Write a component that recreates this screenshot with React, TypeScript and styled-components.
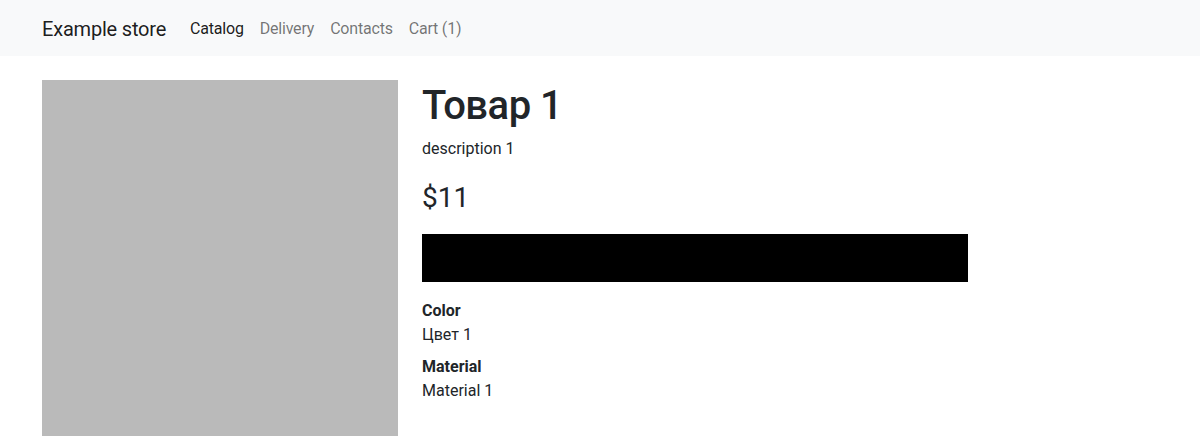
import React from "react";
import styled, { createGlobalStyle } from "styled-components";

const Global = createGlobalStyle`
  *, *::before, *::after { box-sizing: border-box; }
  body {
    margin: 0;
    font-family: "Segoe UI", Roboto, "Open Sans", sans-serif;
    font-size: 16px;
    line-height: 1.5;
    color: #212529;
    background: #fff;
  }
`;

const Navbar = styled.nav`
  background: #f8f9fa;
  height: 56px;
  display: flex;
  align-items: center;
`;

const Container = styled.div`
  width: 1140px;
  margin: 0 auto;
  padding: 2px 12px 0;
  display: flex;
  align-items: center;
`;

const Brand = styled.a`
  font-size: 20px;
  line-height: 30px;
  letter-spacing: -0.2px;
  color: rgba(0, 0, 0, 0.9);
  margin-right: 16px;
  text-decoration: none;
`;

const NavList = styled.div`
  display: flex;
`;

const NavLink = styled.a<{ $active?: boolean }>`
  padding: 8px;
  font-size: 16px;
  line-height: 24px;
  letter-spacing: -0.2px;
  text-decoration: none;
  color: ${(p) => (p.$active ? "rgba(0,0,0,0.9)" : "rgba(0,0,0,0.55)")};
`;

const Main = styled.div`
  width: 1140px;
  margin: 24px auto 0;
  padding: 0 12px;
  display: grid;
  grid-template-columns: 356px 1fr;
  column-gap: 24px;
`;

const ImagePlaceholder = styled.div`
  width: 356px;
  height: 356px;
  background: #bababa;
`;

const Info = styled.div`
  display: flex;
  flex-direction: column;
`;

const Title = styled.h1`
  margin: 2px 0 6px;
  font-size: 40px;
  font-weight: 500;
  line-height: 1.2;
  letter-spacing: -0.5px;
`;

const Description = styled.p`
  margin: 1px 0 15px;
`;

const Price = styled.div`
  font-size: 28px;
  line-height: 1.5;
  margin: 1px 0 15px;
`;

const Bar = styled.div`
  width: 546px;
  height: 48px;
  background: #000;
  margin-bottom: 17px;
`;

const DL = styled.dl`
  margin: 0;
`;

const DT = styled.dt`
  font-weight: 700;
`;

const DD = styled.dd`
  margin: 0 0 8px;
`;

export default function App() {
  return (
    <>
      <Global />
      <Navbar>
        <Container>
          <Brand href="#">Example store</Brand>
          <NavList>
            <NavLink $active href="#">Catalog</NavLink>
            <NavLink href="#">Delivery</NavLink>
            <NavLink href="#">Contacts</NavLink>
            <NavLink href="#">Cart (1)</NavLink>
          </NavList>
        </Container>
      </Navbar>
      <Main>
        <ImagePlaceholder />
        <Info>
          <Title>Товар 1</Title>
          <Description>description 1</Description>
          <Price>$11</Price>
          <Bar />
          <DL>
            <DT>Color</DT>
            <DD>Цвет 1</DD>
            <DT>Material</DT>
            <DD>Material 1</DD>
          </DL>
        </Info>
      </Main>
    </>
  );
}
